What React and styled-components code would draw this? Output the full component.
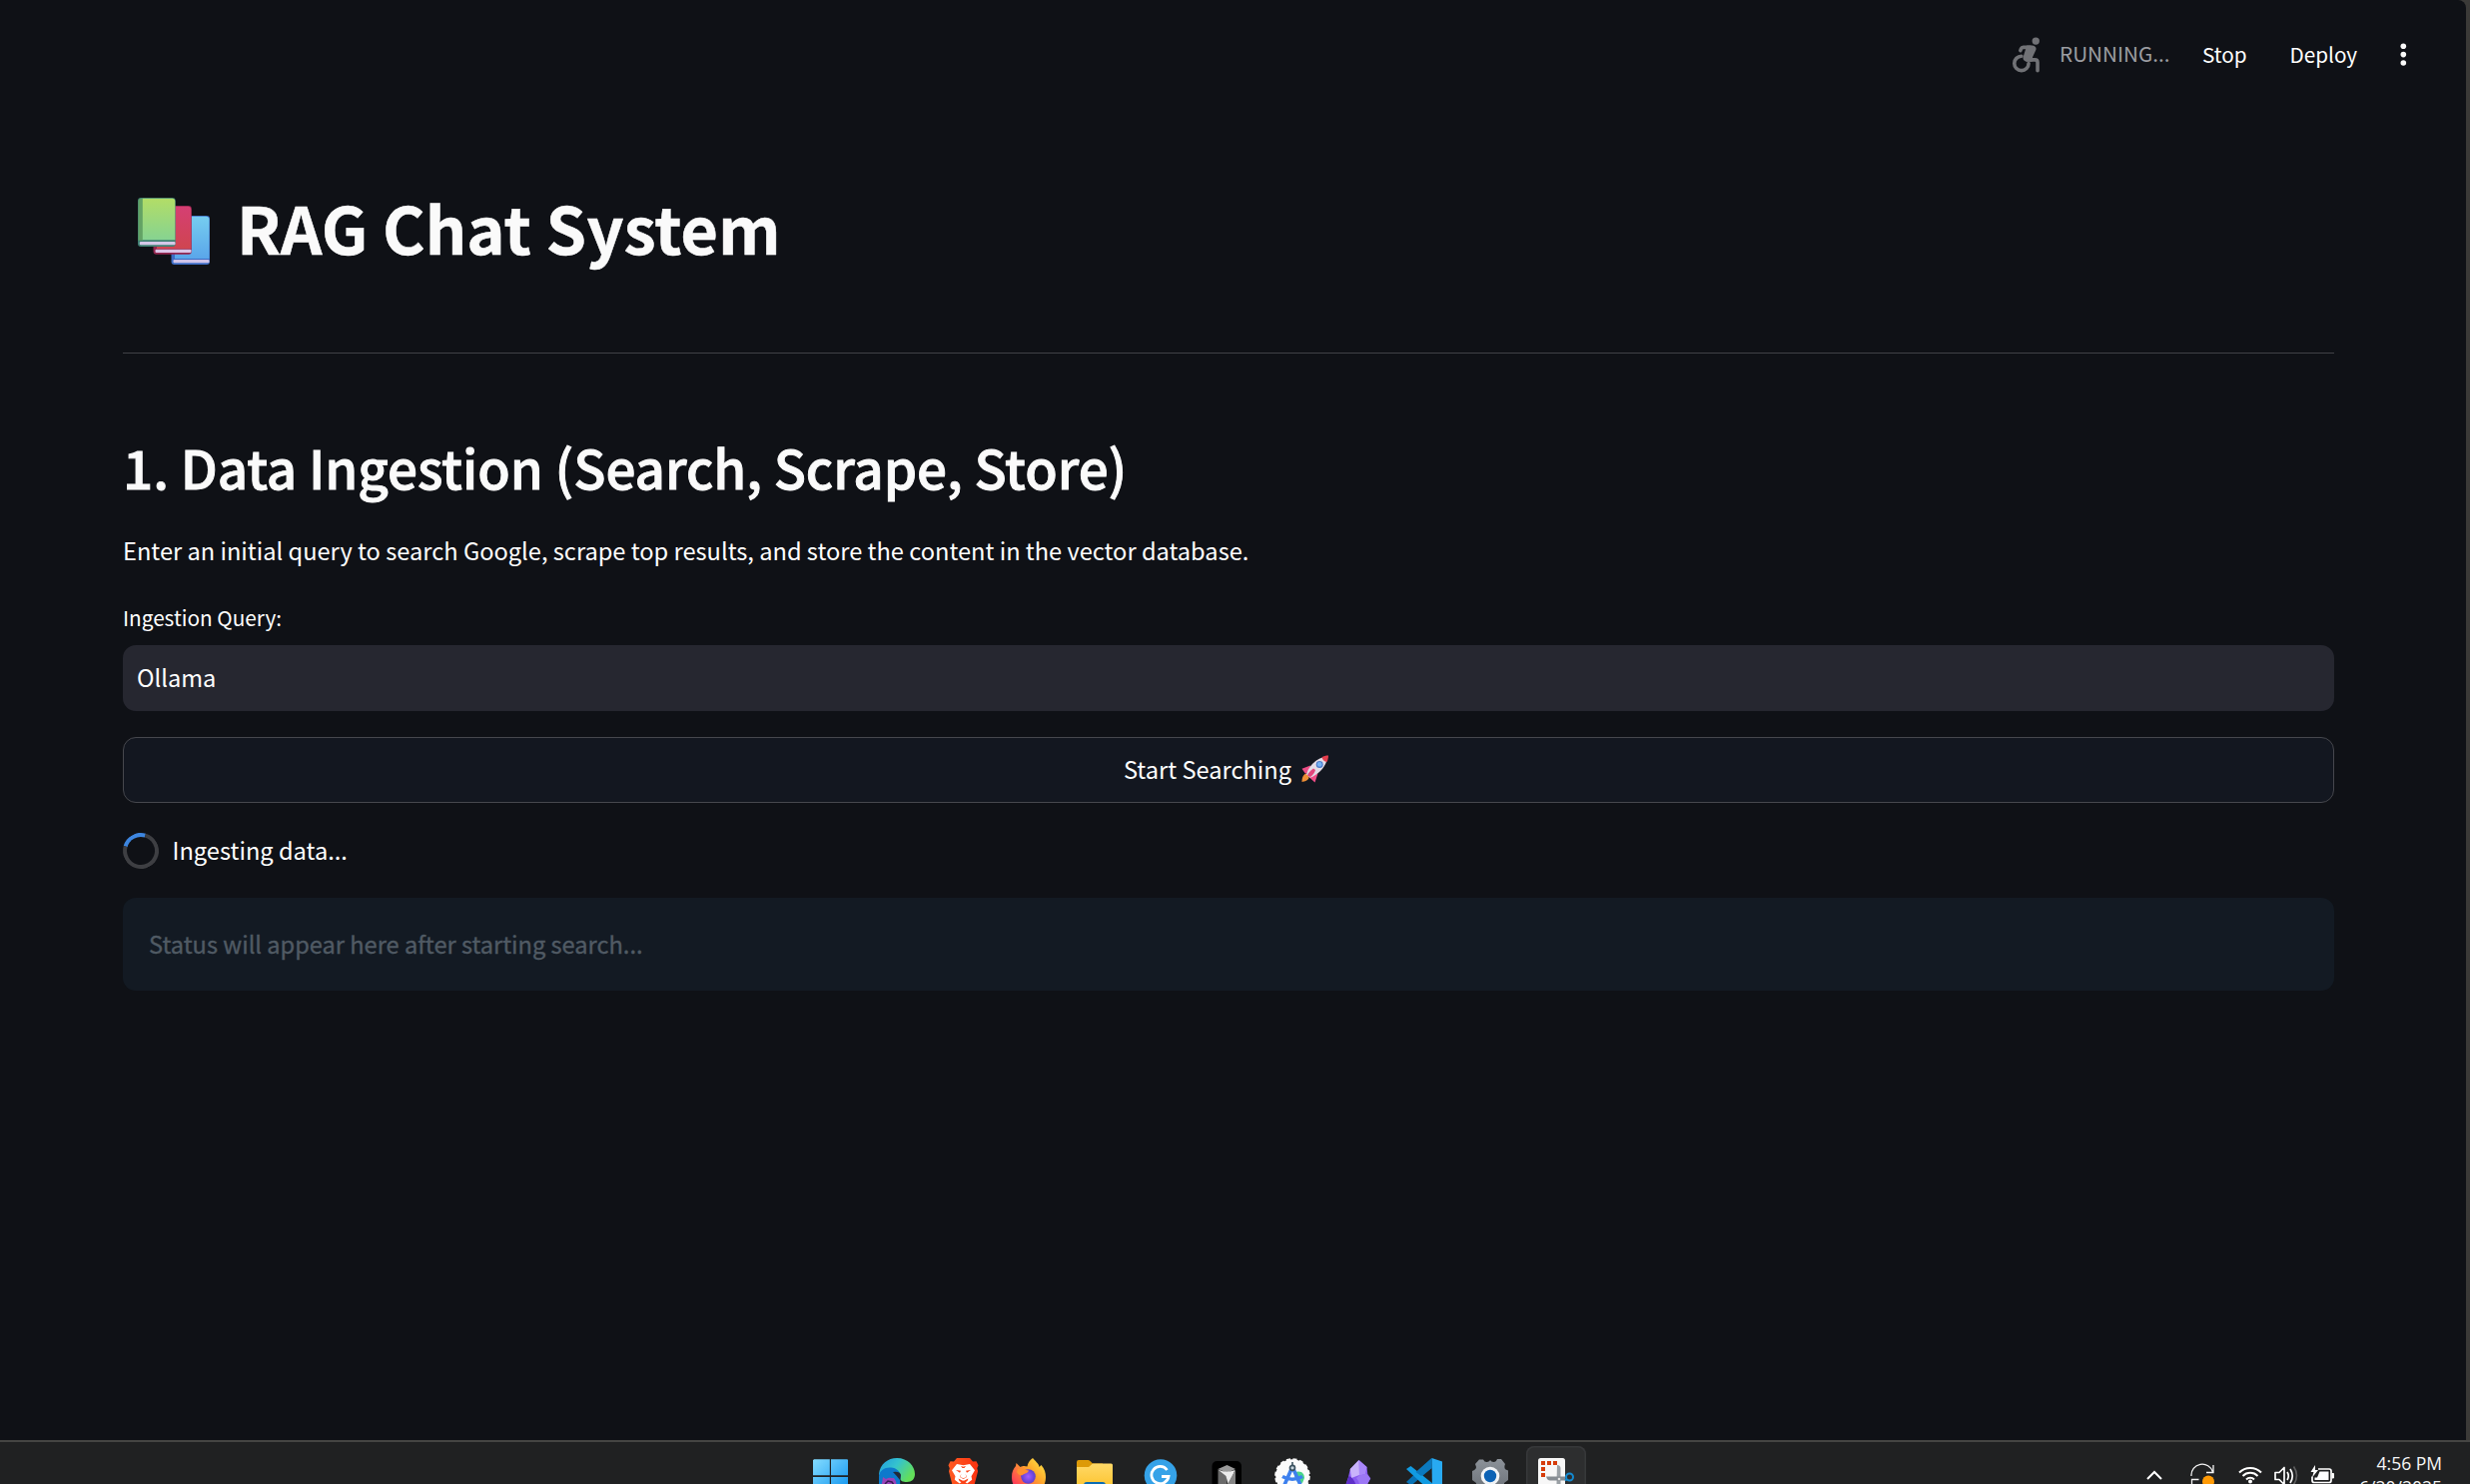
import React from 'react';
import styled, { createGlobalStyle } from 'styled-components';

const GlobalStyle = createGlobalStyle`
  *, *::before, *::after { box-sizing: border-box; }
  html, body { margin: 0; background: #3b3a38; overflow: hidden; }
  body {
    font-family: "Noto Sans CJK SC", "Noto Sans", sans-serif;
    color: #ffffff;
  }
`;

const Screen = styled.div`
  width: 2473px;
  height: 1486px;
  display: flex;
  flex-direction: column;
  overflow: hidden;
`;

const AppWindow = styled.div`
  width: 2469px;
  height: 1442px;
  display: flex;
  flex-direction: column;
  background: #0f1116;
  border-top-right-radius: 8px;
`;

const Header = styled.header`
  height: 110px;
  padding: 0 59px 0 0;
  display: flex;
  justify-content: flex-end;
  align-items: flex-start;
`;

const HeaderText = styled.span`
  width: ${p => p.$w}px;
  margin-left: ${p => p.$gap}px;
  padding-top: ${p => p.$top}px;
  font-size: 20.7px;
  line-height: 34px;
  white-space: nowrap;
  color: ${p => (p.$muted ? '#9c9da2' : '#ffffff')};
`;

const HeaderIcon = styled.svg`
  display: block;
  flex: none;
  margin-top: ${p => p.$top}px;
  margin-left: ${p => p.$gap || 0}px;
`;

const Main = styled.main`
  display: flex;
  flex-direction: column;
  width: 2214px;
  margin-left: 123px;
`;

const Title = styled.h1`
  margin: 0;
  height: 78px;
  margin-top: 78px;
  display: flex;
  align-items: flex-start;
  font-size: 65px;
  font-weight: 700;
  line-height: 78px;
  color: #fafafa;
  -webkit-text-stroke: 0.5px #fafafa;
  white-space: nowrap;
`;

const Books = styled.svg`
  display: block;
  margin: 10px 27px 0 15px;
`;

const Divider = styled.hr`
  width: 100%;
  height: 1px;
  margin: 87px 0 0;
  border: 0;
  background: #404146;
`;

const SectionTitle = styled.h2`
  margin: 81px 0 0;
  height: 64px;
  font-size: 53px;
  font-weight: 500;
  line-height: 64px;
  letter-spacing: -0.08px;
  color: #fafafa;
  -webkit-text-stroke: 0.9px #fafafa;
  white-space: nowrap;
`;

const Paragraph = styled.p`
  margin: 33px 0 0;
  font-size: 23.64px;
  line-height: 38px;
`;

const Label = styled.label`
  margin-top: 31px;
  font-size: 20.75px;
  line-height: 34px;
`;

const Field = styled.div`
  height: 66px;
  margin-top: 11px;
  padding: 0 14px;
  border-radius: 13px;
  background: #262730;
  font-size: 23.6px;
  line-height: 65px;
`;

const SearchButton = styled.button`
  height: 66px;
  margin: 26px 0 0;
  padding: 0 0 2px;
  display: flex;
  justify-content: center;
  align-items: center;
  gap: 9px;
  border: 1px solid #46474d;
  border-radius: 13px;
  background: #131720;
  color: #ffffff;
  font-family: inherit;
  font-size: 23.65px;
  line-height: 38px;
`;

const SpinnerRow = styled.div`
  display: flex;
  height: 36px;
  margin-top: 30px;
  gap: 13.5px;
  align-items: flex-start;
  font-size: 23.65px;
  line-height: 34px;
`;

const Spinner = styled.i`
  width: 36px;
  height: 36px;
  border-radius: 50%;
  border: 4.5px solid #3e3f43;
  border-top-color: #3d86e0;
  transform: rotate(-29deg);
`;

const StatusBox = styled.div`
  height: 93px;
  margin-top: 29px;
  padding: 0 26px;
  border-radius: 13px;
  background: #131a23;
  color: #505a64;
  font-size: 23.6px;
  line-height: 93px;
  -webkit-text-stroke: 0.35px #505a64;
`;

const Taskbar = styled.footer`
  height: 44px;
  display: flex;
  align-items: flex-start;
  border-top: 2px solid #454543;
  background: #202122;
`;

const Apps = styled.div`
  display: flex;
  margin-left: 799px;
`;

const AppSlot = styled.div`
  width: 60px;
  height: 54px;
  margin: 4px 3px 0;
  padding: 12px;
  border-radius: 8px;
  background: ${p => (p.$active ? '#2d2e2f' : 'transparent')};
  box-shadow: ${p => (p.$active ? 'inset 0 0 0 1.5px #37383a' : 'none')};

  svg { display: block; }
`;

const Tray = styled.div`
  display: flex;
  margin-left: 558px;
  width: 188px;

  svg { display: block; flex: none; margin: 21px 12px 0 0; }
  svg:nth-child(1) { margin-right: 28px; }
  svg:nth-child(2) { margin-right: 23px; }
`;

const Clock = styled.div`
  width: 108px;
  display: flex;
  flex-direction: column;
  align-items: flex-end;
  padding-top: 9px;
  font-family: "Open Sans", "Noto Sans", sans-serif;
  font-size: 17.5px;
  line-height: 24px;
  color: #f5f5f5;
  white-space: nowrap;
`;

const Icon = ({ children }) => (
  <svg width="36" height="36" viewBox="0 0 36 36">{children}</svg>
);

const WheelchairIcon = () => (
  <HeaderIcon width="43" height="43" viewBox="0 0 24 24" $top={33} fill="#717276">
    <circle cx="18" cy="4.5" r="2.05" />
    <path d="M10 13a4 4 0 1 0 4 4" fill="none" stroke="#717276" strokeWidth="2" strokeLinecap="round" />
    <path d="M9.400 9.800l.4-1Q10.100 8 11 8h4" fill="none" stroke="#717276" strokeWidth="2" strokeLinecap="round" />
    <path d="M13 7l-2 6.200C10.500 14.700 11.500 16 13 16h3l.2-2.500 1.800-3.900C18.700 8.100 17.400 7 16 7h-3z" />
    <path d="M13 15h4.500c1 0 1.500.5 1.500 1.500V21" fill="none" stroke="#717276" strokeWidth="2" strokeLinecap="round" />
  </HeaderIcon>
);

const BookStack = () => (
  <Books width="72" height="67" viewBox="0 0 72 67">
    <defs>
      <linearGradient id="bg" x1="0" y1="0" x2="0" y2="1"><stop stopColor="#b2dd67" /><stop offset="1" stopColor="#86d391" /></linearGradient>
      <linearGradient id="br" x1="0" y1="0" x2="0" y2="1"><stop stopColor="#d53f73" /><stop offset="1" stopColor="#cf4550" /></linearGradient>
      <linearGradient id="bb" x1="0" y1="0" x2="0" y2="1"><stop stopColor="#76cdf0" /><stop offset="1" stopColor="#5aa6ea" /></linearGradient>
    </defs>
    <rect x="33.500" y="18" width="38.500" height="49" rx="3" fill="#3d6cc4" />
    <path d="M37 18.700h31q3.500 0 3.500 3.300v39H37z" fill="url(#bb)" />
    <rect x="35.500" y="62" width="36" height="3.300" rx="1" fill="#cfc4ea" />
    <rect x="15.500" y="8" width="38.300" height="48.700" rx="3" fill="#93264f" />
    <path d="M19 8.700h31q3.300 0 3.300 3.300v39H19z" fill="url(#br)" />
    <rect x="17.500" y="51.800" width="36" height="3.300" rx="1" fill="#dcc4e6" />
    <rect x="0" y="0" width="37.700" height="49" rx="3" fill="#3f7f73" />
    <path d="M.5 4Q.5.800 3 .8h2v42H.5z" fill="#62a264" />
    <path d="M4.800.8h29.500q3 0 3 3v38.500H4.800z" fill="url(#bg)" />
    <rect x="1.800" y="44" width="35.700" height="3.300" rx="1" fill="#d5c8e8" />
  </Books>
);

const Rocket = () => (
  <svg width="33" height="30" viewBox="0 0 33 30">
    <path d="M4 20.500c2-1.800 5.500.5 4.500 3.500-.8 2.500-4 3.500-7 4 0-3 .5-6 2.500-7.500z" fill="#ef8f35" />
    <path d="M10 11.500L1.500 14.800l3.500 5 4.500-1zM17.500 19.500L14.500 28.500 9 23.500l1.500-4z" fill="#ee4d86" />
    <path d="M27 2.500C17 3.500 8.500 11 6 20.500l3.800 3.200C19 20 26.500 12 27 2.500z" fill="#e3dce6" />
    <path d="M28 1.500c-2.500 0-5 .7-6.500 1.700.5 2.300 2.500 4.500 5 4.800 1-2 1.500-4.300 1.500-6.500z" fill="#e33e4d" />
    <path d="M13 14.500c-3 2-5.500 5-6 7l3 1.500c2.500-1.500 4.500-5 5-7z" fill="#e2467c" />
    <circle cx="19.200" cy="10.400" r="3.500" fill="#4a78c8" />
    <circle cx="19.200" cy="10.400" r="2.400" fill="#74b2f4" />
  </svg>
);

const WindowsIcon = () => (
  <Icon>
    <defs><linearGradient id="win" x1="0" y1="0" x2="1" y2="1"><stop stopColor="#84dcff" /><stop offset="1" stopColor="#0a90ee" /></linearGradient></defs>
    <path d="M1 1.300h15.800v16H0V2.300zM18 1.300h16q1 0 1 1v15H18zM0 19h16.800v17H0zM18 19h17v17H18z" fill="url(#win)" />
  </Icon>
);

const EdgeIcon = () => (
  <Icon>
    <defs>
      <linearGradient id="e1" x1="0" y1="0" x2="1" y2=".5"><stop stopColor="#1f9be0" /><stop offset=".5" stopColor="#35c3ce" /><stop offset="1" stopColor="#63df5a" /></linearGradient>
    </defs>
    <path d="M0 16C1 6 9 0 18 0c11 0 18 8 18 16 0 5-3 8-8 8-4 0-7-1-6.500-4 1-5-3-8-9-8C6 12 1 15 0 18z" fill="url(#e1)" />
    <path d="M0 18C1 12 6 9 12 9.500c6 .5 10 4 9.500 10-.5 2-.5 5 0 8V36H6C0 31-1 24 0 18z" fill="#0d79cc" />
    <path d="M14 14q7-1 8 3l-1 5q-3-4-7-8z" fill="#222a38" />
    <path d="M4 19l3 2c3-2 5-1 8-1 2 3 3 5 2 8l1 8H3c-2-5 0-9 1-17z" fill="#9a43b8" />
    <path d="M6 26l3-3 4 1 2 3" fill="none" stroke="#3a1a55" strokeWidth="1.500" />
  </Icon>
);

const BraveIcon = () => (
  <Icon>
    <defs><linearGradient id="brv" x1="0" y1="0" x2="1" y2="0"><stop stopColor="#ff5a22" /><stop offset="1" stopColor="#fb3210" /></linearGradient></defs>
    <path d="M12 0h13l3 3.500 3.500-.3 2 4-1.200 3 .8 3L29 29l-10.500 7L8 29 4 13.200l.8-3-1.300-3 2-4L9 3.500z" fill="url(#brv)" />
    <path d="M12 6l6.500 1.300L25 6l5 6.300-3.500 6 .7 3.500-5 3.700-3.700-3-3.700 3-5-3.700.7-3.500L7 12.300z" fill="#fff" />
    <path d="M11 12l5 .8-1 2zM26 12l-5 .8 1 2zM16 8l2.500.8L21 8l-1.500 2h-2zM16.500 15.500l-1.500 3.500 3.500 2 3.500-2-1.500-3.500 1 3.500-3 1.200-3-1.200zM13.500 20.500l5 2.500 5-2.500-1 2.500-4 2.500-4-2.500z" fill="#fb4218" />
  </Icon>
);

const FirefoxIcon = () => (
  <Icon>
    <defs>
      <linearGradient id="ff" x1="1" y1="0" x2="0" y2="1"><stop stopColor="#fff04a" /><stop offset=".4" stopColor="#ffa52a" /><stop offset=".8" stopColor="#ff4055" /><stop offset="1" stopColor="#e0308a" /></linearGradient>
      <radialGradient id="ffc"><stop stopColor="#a45cff" /><stop offset="1" stopColor="#5b3fd0" /></radialGradient>
    </defs>
    <path d="M22 0c2 3 6 5 6.500 9l2-2C34 11 35 15 35 19c0 10-7 17-17 17S1 29 1 19c0-5 1.500-8 4-11l.5-3 4 4c3-1.500 5-1 7-.5C17 5 19 2 22 0z" fill="url(#ff)" />
    <circle cx="17.500" cy="18.500" r="7.300" fill="url(#ffc)" />
    <path d="M7 11c4-1 6 1 11 1.500-1 3-4 2.500-6 4.500-3 1-5-1-6-3z" fill="#ff9130" />
  </Icon>
);

const FolderIcon = () => (
  <Icon>
    <defs><linearGradient id="fd" x1="0" y1="0" x2="0" y2="1"><stop stopColor="#ffd968" /><stop offset="1" stopColor="#fcc127" /></linearGradient></defs>
    <path d="M0 4q0-2 2-2h9.500q1.500 0 2.500 1.500L16 5.500h10V14H0z" fill="#dd9a07" />
    <path d="M0 9h12l4-3.500h18.500q1.500 0 1.500 1.500v26H0z" fill="url(#fd)" />
    <path d="M7 36V27q0-3 3-3h16q3 0 3 3v9z" fill="#0b6cb4" />
  </Icon>
);

const GrammarIcon = () => (
  <Icon>
    <circle cx="18" cy="17.500" r="16.300" fill="#35a2e8" />
    <path d="M24.500 12A8.600 8.600 0 1 0 26 18.500H19" fill="none" stroke="#fff" strokeWidth="2.800" />
  </Icon>
);

const CursorIcon = () => (
  <Icon>
    <rect x="3.500" y="3" width="29.500" height="33" rx="5" fill="#000" />
    <path d="M9.500 11l9-4 8.500 4-8.500 4z" fill="#9a9a9a" />
    <path d="M9.500 11l9 4v20l-9-7z" fill="#6a6a6a" />
    <path d="M10 12q8 3.500 16.500 0-2 7-7 14l-2-8z" fill="#ececec" />
    <path d="M27 11.500v16L18.500 34v-7z" fill="#858585" />
  </Icon>
);

const StudioIcon = () => (
  <Icon>
    <circle cx="18" cy="18" r="16.800" fill="#fbfbfb" />
    <circle cx="18" cy="18" r="16.800" fill="none" stroke="#fbfbfb" strokeWidth="2" strokeDasharray="4 2.600" />
    <path d="M20 18q0-6 7-4 3 2 3 6l-2 5-5-1z" fill="#49d489" />
    <path d="M17 11L10 27M19 11l7 16M8 18.500q10 5.500 20 0" fill="none" stroke="#3d80ee" strokeWidth="3.600" />
    <circle cx="18" cy="9.800" r="2.500" fill="#c8d4dd" stroke="#3c5360" strokeWidth="1.700" />
    <path d="M18 4v4" stroke="#3c5360" strokeWidth="1.600" />
  </Icon>
);

const ObsidianIcon = () => (
  <Icon>
    <path d="M18.500 2l8 7 .8 7 3 4.500L25 30l-8 5-12-7 3-9 1.800-8z" fill="#8a5cf0" />
    <path d="M18.500 2l8 7L25 16l-6 1.500z" fill="#a987fa" />
    <path d="M18.500 2l.5 15-8 3-1.200-9z" fill="#c9b3fb" />
    <path d="M8.500 18q6 2 8.500 14l-12-4z" fill="#5e2fc9" />
    <path d="M19 17.500l7-2 4 5L25 30l-6 3q1-9-3-13z" fill="#9c77f5" />
  </Icon>
);

const CodeIcon = () => (
  <Icon>
    <path d="M25.500 0v10L5 27.500 0 24z" fill="#0872b5" />
    <path d="M0 11l4.500-3L27 26v10z" fill="#119be2" />
    <path d="M25.500 0L36 3.500V33l-10 3z" fill="#28aaf2" />
    <path d="M25.500 0v10L15 18 9.500 14z" fill="#0b79be" />
  </Icon>
);

const SettingsIcon = () => (
  <Icon>
    <defs><linearGradient id="gear" x1="0" y1="0" x2="0" y2="1"><stop stopColor="#8c9299" /><stop offset="1" stopColor="#6b7178" /></linearGradient></defs>
    <path d="M7 1.500h4q1.500 3 4 2.500T18 2q1 2 3.500 2T25 1h4l4 5q-1.500 4 .5 5.500l2.500 1V22l-4 3v5l-4 4H8l-4-4v-5l-4-3v-9q4-1.500 4-4l-1-3z" fill="url(#gear)" />
    <circle cx="18" cy="18" r="9.300" fill="#f1f3f5" />
    <circle cx="18" cy="18" r="6.200" fill="#0c62b5" />
  </Icon>
);

const SnipIcon = () => (
  <Icon>
    <rect x="0" y="0" width="27" height="36" rx="2.500" fill="#f7f7f7" />
    <path d="M3 3h4v4H3zM9 3h4v4H9zM15 3h4v4h-4zM3 9h4v4H3zM3 15h4v4H3z" fill="#d63c0b" />
    <path d="M19 7q3.500 0 3.500 3.500V26h-4z" fill="#9aa0a5" />
    <path d="M8 18.500h19v4H12q-3 0-4-4z" fill="#868c92" />
    <circle cx="21" cy="21" r="1.300" fill="#e4e4e4" />
    <circle cx="31.500" cy="19" r="3.500" fill="none" stroke="#1389d0" strokeWidth="2" />
    <path d="M27 22.500l2-1.500" stroke="#1389d0" strokeWidth="2" />
  </Icon>
);

const apps = [
  WindowsIcon, EdgeIcon, BraveIcon, FirefoxIcon, FolderIcon, GrammarIcon,
  CursorIcon, StudioIcon, ObsidianIcon, CodeIcon, SettingsIcon, SnipIcon,
];

const TrayIcons = () => (
  <Tray>
    <svg width="16" height="21" viewBox="0 0 16 21">
      <path d="M1 16l7-7 7 7" fill="none" stroke="#fff" strokeWidth="2" />
    </svg>
    <svg width="25" height="21" viewBox="0 0 25 21">
      <path d="M1 13A11 11 0 0 1 22.500 9M23 2v7.500h-7M1.500 24v-7.500h7" fill="none" stroke="#f4f4f4" strokeWidth="1.300" />
      <circle cx="18" cy="18.500" r="6" fill="#ff9a06" />
    </svg>
    <svg width="24" height="21" viewBox="0 0 24 21">
      <path d="M1 9.500a15.500 15.500 0 0 1 22 0M4.500 13a10.500 10.500 0 0 1 15 0M8 16.500a5.600 5.600 0 0 1 8 0" fill="none" stroke="#fff" strokeWidth="2" />
      <circle cx="12" cy="18.500" r="2" fill="#fff" />
    </svg>
    <svg width="24" height="21" viewBox="0 0 24 21">
      <path d="M1 9.500h4l5-5v17l-5-5H1z" fill="none" stroke="#fff" strokeWidth="1.700" strokeLinejoin="round" />
      <path d="M13 9q2.500 4 0 8M16 6q4.500 7 0 14" fill="none" stroke="#fff" strokeWidth="1.700" />
      <path d="M19.500 3.500q6 9 0 18" fill="none" stroke="#5d5d5e" strokeWidth="1.600" />
    </svg>
    <svg width="25" height="21" viewBox="0 0 25 21">
      <path d="M8 6h11q2 0 2 2v9.500q0 2-2 2H4q-2 0-2-2v-4" fill="none" stroke="#fff" strokeWidth="1.700" />
      <path d="M9.500 8.500h9V17h-14v-2.500H7z" fill="#fff" />
      <path d="M22 10.500h1.500v4.500H22z" stroke="#fff" fill="#fff" />
      <path d="M5 2L.5 9h3L2 14.500 8 7H5z" fill="#fff" />
    </svg>
  </Tray>
);

export default function App() {
  return (
    <Screen>
      <GlobalStyle />
      <AppWindow>
        <Header>
          <WheelchairIcon />
          <HeaderText $w={111} $gap={13.5} $top={36} $muted>RUNNING...</HeaderText>
          <HeaderText $w={45} $gap={32} $top={37}>Stop</HeaderText>
          <HeaderText $w={68} $gap={42.5} $top={37}>Deploy</HeaderText>
          <HeaderIcon width="8" height="26" viewBox="0 0 8 26" $top={42} $gap={41.5} fill="#fafafa">
            <circle cx="4.300" cy="4.300" r="2.800" />
            <circle cx="4.300" cy="12.600" r="2.800" />
            <circle cx="4.300" cy="21" r="2.800" />
          </HeaderIcon>
        </Header>
        <Main>
          <Title><BookStack />RAG Chat System</Title>
          <Divider />
          <SectionTitle>1. Data Ingestion (Search, Scrape, Store)</SectionTitle>
          <Paragraph>Enter an initial query to search Google, scrape top results, and store the content in the vector database.</Paragraph>
          <Label>Ingestion Query:</Label>
          <Field>Ollama</Field>
          <SearchButton>Start Searching <Rocket /></SearchButton>
          <SpinnerRow><Spinner />Ingesting data...</SpinnerRow>
          <StatusBox>Status will appear here after starting search...</StatusBox>
        </Main>
      </AppWindow>
      <Taskbar>
        <Apps>
          {apps.map((AppIcon, i) => (
            <AppSlot key={i} $active={i === apps.length - 1}><AppIcon /></AppSlot>
          ))}
        </Apps>
        <TrayIcons />
        <Clock><span>4:56 PM</span><span>6/20/2025</span></Clock>
      </Taskbar>
    </Screen>
  );
}
